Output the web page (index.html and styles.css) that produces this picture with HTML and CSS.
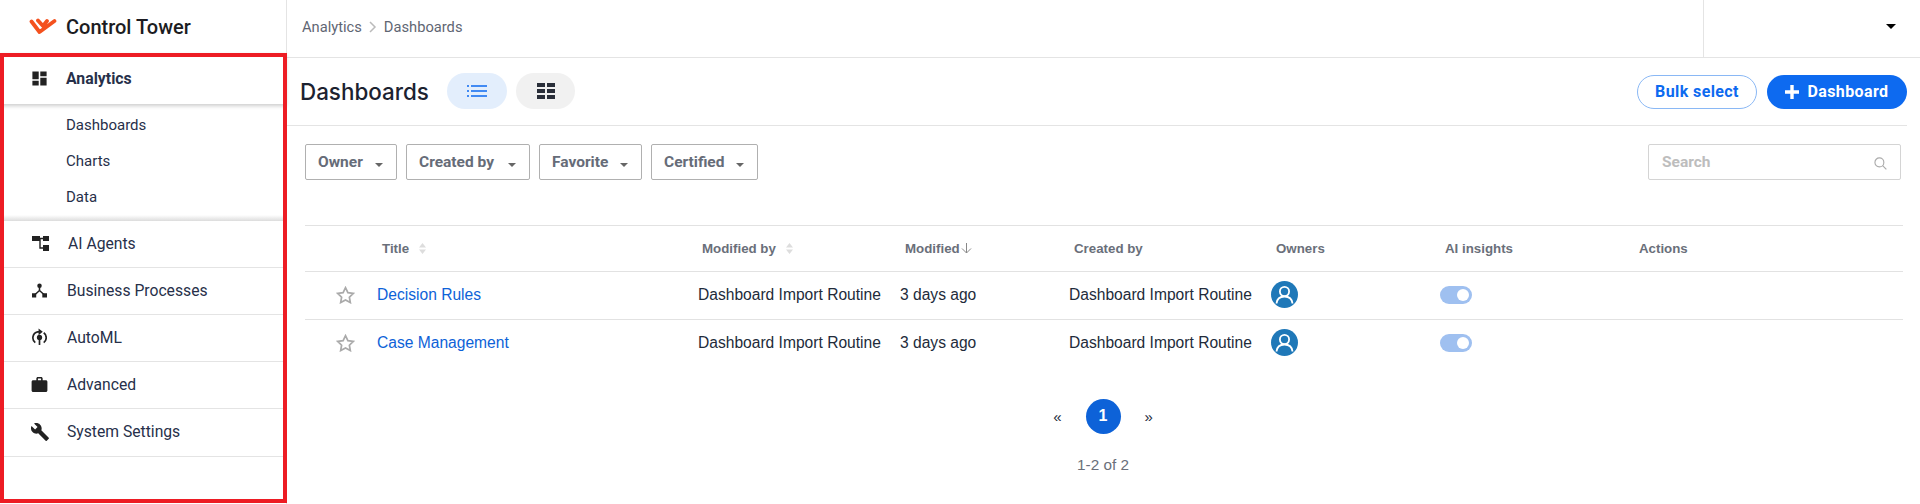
FILE: index.html
```html
<!DOCTYPE html>
<html lang="en">
<head>
  <meta charset="UTF-8" />
  <title>Control Tower</title>
  <link rel="stylesheet" href="styles.css">
</head>
<body>
  <aside class="sidebar">
    <div class="brand">
      <svg class="logo" viewBox="0 0 28 17" width="28" height="17">
        <path d="M2.500 3.500L10.500 14L25.500 3M9 2.500L14 8L18 3" fill="none" stroke="#f4511e" stroke-width="3.800" stroke-linecap="round" stroke-linejoin="round"/>
      </svg>
      <span>Control Tower</span>
    </div>
    <div class="nav-open">
      <div class="nav-item nav-active">
        <svg class="nav-icon" viewBox="2.500 2.500 19 19"><path d="M3 13h8V3H3v10zm0 8h8v-6H3v6zm10 0h8V11h-8v10zm0-18v6h8V3h-8z"/></svg>
        <span>Analytics</span>
      </div>
      <ul class="subnav">
        <li>Dashboards</li>
        <li>Charts</li>
        <li>Data</li>
      </ul>
    </div>
    <div class="nav-item">
      <svg class="nav-icon icon-wide" viewBox="0 0 17 15"><path d="M0 0h8v5H0zM11 0h6v5h-6zM11 9h6v6h-6z"/><path d="M7 2.500h5M8 2.500v9.500h4" fill="none" stroke="#222" stroke-width="1.400"/></svg>
      <span class="agents-label">AI Agents</span>
    </div>
    <div class="nav-item">
      <svg class="nav-icon" viewBox="0 0 16 15"><circle cx="8" cy="2.400" r="2.400"/><path d="M0 10.500h4.500V15H0zM11 10.500h5V15h-5z"/><path d="M8 3v5M8 7.500L3 12M8 7.500L13 12" fill="none" stroke="#222" stroke-width="1.600"/></svg>
      <span>Business Processes</span>
    </div>
    <div class="nav-item">
      <svg class="nav-icon icon-tall" viewBox="0 0 16 18"><circle cx="8" cy="9.500" r="2.800"/><path d="M7.100 11h1.800v6.500H7.100z"/><path d="M3.500 15A6.500 6.500 0 0 1 6 3.500H8M12.500 15A6.500 6.500 0 0 0 12.500 4.500" fill="none" stroke="#222" stroke-width="1.800"/><path d="M7 0l4.500 3.500L7 7z"/></svg>
      <span>AutoML</span>
    </div>
    <div class="nav-item">
      <svg class="nav-icon icon-wide icon-shift" viewBox="2 2 20 19"><path d="M20 6h-4V4c0-1.110-.890-2-2-2h-4c-1.110 0-2 .890-2 2v2H4c-1.110 0-1.990.890-1.990 2L2 19c0 1.110.890 2 2 2h16c1.110 0 2-.890 2-2V8c0-1.110-.890-2-2-2zm-6 0h-4V4h4v2z"/></svg>
      <span>Advanced</span>
    </div>
    <div class="nav-item nav-last">
      <svg class="nav-icon icon-wrench" viewBox="1 1 22 22"><path d="M22.700 19l-9.100-9.100c.900-2.300.400-5-1.500-6.900-2-2-5-2.400-7.400-1.300L9 6 6 9 1.600 4.700C.400 7.100.900 10.100 2.900 12.100c1.900 1.900 4.600 2.400 6.900 1.500l9.100 9.100c.400.400 1 .400 1.400 0l2.300-2.300c.500-.400.500-1.100.100-1.400z"/></svg>
      <span>System Settings</span>
    </div>
    <div class="highlight"></div>
  </aside>

  <main class="main">
    <header class="topbar">
      <div class="crumbs">
        <span>Analytics</span>
        <svg viewBox="0 0 8 12" width="8" height="12"><path d="M1 1l5 5-5 5" fill="none" stroke="#bbb" stroke-width="1.500"/></svg>
        <span>Dashboards</span>
      </div>
      <div class="user-menu"><span class="caret"></span></div>
    </header>

    <div class="page-head">
      <h1>Dashboards</h1>
      <button class="view-btn view-on">
        <svg viewBox="0 0 20 12" width="20" height="12"><path d="M0 1h2M4 1h16M0 6h2M4 6h16M0 11h2M4 11h16" stroke="#0d6af0" stroke-width="1.600" fill="none"/></svg>
      </button>
      <button class="view-btn view-off">
        <svg viewBox="0 0 18 16" width="18" height="16"><path d="M0 0h8v4H0zM10 0h8v4h-8zM0 6h8v4H0zM10 6h8v4h-8zM0 12h8v4H0zM10 12h8v4h-8z" fill="#2a2f3a"/></svg>
      </button>
      <div class="head-actions">
        <button class="btn-outline">Bulk select</button>
        <button class="btn-solid">
          <svg viewBox="0 0 14 14" width="14" height="14"><path d="M7 0v14M0 7h14" stroke="#fff" stroke-width="3.400"/></svg>
          Dashboard
        </button>
      </div>
    </div>

    <div class="filters">
      <button class="filter owner">Owner<i></i></button>
      <button class="filter created">Created by<i></i></button>
      <button class="filter favorite">Favorite<i></i></button>
      <button class="filter certified">Certified<i></i></button>
      <div class="search">
        <span>Search</span>
        <svg viewBox="0 0 14 14" width="13" height="13"><circle cx="5.800" cy="5.800" r="4.800" fill="none" stroke="#aaa" stroke-width="1.200"/><path d="M9.300 9.300L13.300 13.300" stroke="#aaa" stroke-width="1.200"/></svg>
      </div>
    </div>

    <table class="grid">
      <colgroup>
        <col class="c-star"><col class="c-title"><col class="c-by"><col class="c-mod"><col class="c-by"><col class="c-mod"><col class="c-ai"><col>
      </colgroup>
      <thead>
        <tr>
          <th></th>
          <th>Title <svg class="sort" viewBox="0 0 7 11"><path d="M3.500 0L7 4.500H0zM3.500 11L0 6.500h7z"/></svg></th>
          <th>Modified by <svg class="sort" viewBox="0 0 7 11"><path d="M3.500 0L7 4.500H0zM3.500 11L0 6.500h7z"/></svg></th>
          <th>Modified<svg class="arrow" viewBox="0 0 11 11" width="11" height="11"><path d="M5.500 0v10M1 5.500l4.500 4.500 4.500-4.500" fill="none" stroke="#888" stroke-width="1"/></svg></th>
          <th>Created by</th>
          <th>Owners</th>
          <th>AI insights</th>
          <th>Actions</th>
        </tr>
      </thead>
      <tbody>
        <tr>
          <td><svg class="star" viewBox="0 0 20 19"><path d="M10 1.800l2.500 5.200 5.700.800-4.100 4 1 5.700-5.100-2.700-5.100 2.700 1-5.700-4.100-4 5.700-.800z" fill="none" stroke="#aaa" stroke-width="1.800"/></svg></td>
          <td><a href="#">Decision Rules</a></td>
          <td>Dashboard Import Routine</td>
          <td>3 days ago</td>
          <td>Dashboard Import Routine</td>
          <td><svg class="avatar" viewBox="0 0 27 27"><circle cx="13.500" cy="13.500" r="13.500" fill="#1f78b8"/><circle cx="13.500" cy="10.500" r="4.600" fill="none" stroke="#fff" stroke-width="1.800"/><path d="M5.500 22.500c.500-4.500 3.500-7 8-7s7.500 2.500 8 7" fill="none" stroke="#fff" stroke-width="1.800"/></svg></td>
          <td><span class="toggle"></span></td>
          <td></td>
        </tr>
        <tr>
          <td><svg class="star" viewBox="0 0 20 19"><path d="M10 1.800l2.500 5.200 5.700.800-4.100 4 1 5.700-5.100-2.700-5.100 2.700 1-5.700-4.100-4 5.700-.800z" fill="none" stroke="#aaa" stroke-width="1.800"/></svg></td>
          <td><a href="#">Case Management</a></td>
          <td>Dashboard Import Routine</td>
          <td>3 days ago</td>
          <td>Dashboard Import Routine</td>
          <td><svg class="avatar" viewBox="0 0 27 27"><circle cx="13.500" cy="13.500" r="13.500" fill="#1f78b8"/><circle cx="13.500" cy="10.500" r="4.600" fill="none" stroke="#fff" stroke-width="1.800"/><path d="M5.500 22.500c.500-4.500 3.500-7 8-7s7.500 2.500 8 7" fill="none" stroke="#fff" stroke-width="1.800"/></svg></td>
          <td><span class="toggle"></span></td>
          <td></td>
        </tr>
      </tbody>
    </table>

    <nav class="pager">
      <span>«</span>
      <span class="page-current">1</span>
      <span>»</span>
    </nav>
    <div class="count">1-2 of 2</div>
  </main>
</body>
</html>
```

FILE: styles.css
```css
* {
  box-sizing: border-box;
}

html, body {
  height: 100%;
}

body {
  margin: 0;
  display: flex;
  height: 504px;
  overflow: hidden;
  background: #fff;
  color: #222;
  font-family: Roboto, sans-serif;
}

/* sidebar */
.sidebar {
  position: relative;
  width: 287px;
  flex: none;
  border-right: 1px solid #e4e4e4;
}

.brand {
  height: 53px;
  display: flex;
  align-items: center;
  padding-left: 29px;
  gap: 9px;
  font-size: 20px;
  font-weight: 500;
  color: #1c1c22;
}

.logo {
  flex: none;
}

.nav-item {
  height: 47px;
  display: flex;
  align-items: center;
  padding-left: 32px;
  padding-bottom: 2px;
  font-size: 15.700px;
  color: #27304a;
  border-bottom: 1px solid #e4e4e4;
}

.nav-last {
  height: 48px;
}

.nav-icon {
  width: 15px;
  height: 15px;
  margin-right: 20px;
  fill: #222;
  flex: none;
}

.icon-wide {
  width: 17px;
  margin-right: 18px;
}

.icon-shift {
  margin-left: -1px;
  margin-right: 19px;
}

.icon-tall {
  height: 18px;
}

.icon-wrench {
  width: 18px;
  height: 18px;
  margin-left: -1px;
  margin-right: 18px;
}

.agents-label {
  margin-left: 1px;
}

.nav-active {
  height: 51px;
  padding-bottom: 0;
  font-weight: 700;
  font-size: 15.800px;
  box-shadow: 0 2px 4px rgba(0, 0, 0, 0.2);
  border-bottom: 0;
  position: relative;
}

.nav-active .nav-icon {
  margin-right: 19px;
}

.subnav {
  list-style: none;
  margin: 0;
  padding: 3px 0 6px 66px;
  font-size: 15px;
  color: #27304a;
  background: linear-gradient(to bottom, transparent, #dcdcdc) bottom / 100% 6px no-repeat;
}

.subnav li {
  height: 36px;
  line-height: 36px;
}

.highlight {
  position: absolute;
  left: 0;
  top: 53px;
  width: 287px;
  height: 450px;
  border: 4px solid #ed1c24;
  pointer-events: none;
}

/* main */
.main {
  flex: 1;
  min-width: 0;
}

.topbar {
  height: 58px;
  display: flex;
  align-items: stretch;
  justify-content: space-between;
  border-bottom: 1px solid #e4e4e4;
}

.crumbs {
  display: flex;
  align-items: center;
  gap: 7px;
  padding-left: 15px;
  font-size: 14.700px;
  color: #5f6673;
  margin-top: -3px;
}

.user-menu {
  width: 217px;
  border-left: 1px solid #e4e4e4;
  display: flex;
  justify-content: flex-end;
  align-items: center;
  padding-right: 24px;
}

.caret {
  width: 0;
  height: 0;
  border-left: 5px solid transparent;
  border-right: 5px solid transparent;
  border-top: 5px solid #000;
  margin-top: -4px;
}

.page-head {
  height: 68px;
  width: 1620px;
  display: flex;
  align-items: center;
  padding-left: 13px;
  border-bottom: 1px solid #e4e4e4;
}

h1 {
  margin: 0 19px 0 0;
  font-family: Inter, sans-serif;
  font-size: 22.400px;
  font-weight: 500;
  color: #1c2230;
  width: 128px;
  white-space: nowrap;
}

.view-btn {
  height: 36px;
  border: 0;
  border-radius: 18px;
  display: flex;
  align-items: center;
  justify-content: center;
  padding: 0;
  margin-top: -1px;
}

.view-on {
  width: 60px;
  background: #e3eefc;
  margin-right: 9px;
}

.view-off {
  width: 59px;
  background: #f1f1f1;
}

.head-actions {
  margin-left: auto;
  display: flex;
  align-items: center;
  gap: 10px;
}

.btn-outline, .btn-solid {
  height: 34px;
  border-radius: 17px;
  font-family: Roboto, sans-serif;
  font-size: 16px;
  letter-spacing: 0.4px;
  font-weight: 700;
  padding: 0;
}

.btn-outline {
  width: 120px;
  background: #fff;
  color: #0d6af0;
  border: 1px solid #8ab8f5;
}

.btn-solid {
  width: 140px;
  background: #0d6af0;
  color: #fff;
  border: 0;
  display: flex;
  align-items: center;
  justify-content: center;
  gap: 8px;
}

.filters {
  display: flex;
  gap: 9px;
  padding: 18px 19px 0 18px;
  align-items: center;
}

.filter {
  height: 36px;
  background: #fff;
  border: 1px solid #b0b0b0;
  border-radius: 2px;
  font-family: Roboto, sans-serif;
  font-size: 15.500px;
  font-weight: 700;
  color: #666c78;
  text-align: left;
  padding: 0 0 0 12px;
  position: relative;
}

.filter i {
  position: absolute;
  right: 13px;
  top: 18px;
  border-left: 4px solid transparent;
  border-right: 4px solid transparent;
  border-top: 4px solid #666;
}

.owner { width: 92px; }
.created { width: 124px; }
.favorite { width: 103px; }
.certified { width: 107px; }

.search {
  width: 253px;
  height: 36px;
  margin-left: auto;
  border: 1px solid #d4d4d4;
  border-radius: 2px;
  display: flex;
  align-items: center;
  justify-content: space-between;
  padding: 0 13px 0 13px;
  font-size: 15.500px;
  font-weight: 700;
  color: #bdbdbd;
}

.search svg {
  margin-top: 2px;
}

/* table */
.grid {
  table-layout: fixed;
  border-collapse: collapse;
  width: 1598px;
  margin: 45px 0 0 18px;
  font-family: "Liberation Sans", Arial, sans-serif;
  font-size: 15.600px;
  color: #222b3a;
}

.c-star { width: 68px; }
.c-title { width: 320px; }
.c-by { width: 202px; }
.c-mod { width: 169px; }
.c-ai { width: 194px; }

.grid th {
  height: 46px;
  padding: 0 0 1px 9px;
  text-align: left;
  font-size: 13.300px;
  font-weight: 700;
  color: #6a6f7a;
  border-top: 1px solid #e2e2e2;
  border-bottom: 1px solid #e2e2e2;
}

.grid th:nth-child(n+4) {
  padding-left: 10px;
}

.grid td {
  height: 48px;
  padding: 0 0 2px 5px;
  border-bottom: 1px solid #e2e2e2;
  vertical-align: middle;
}

.grid tbody tr:last-child td {
  border-bottom: 0;
}

.grid a {
  color: #0d62d8;
  text-decoration: none;
  margin-left: -1px;
}

.sort {
  width: 7px;
  height: 11px;
  margin-left: 6px;
  vertical-align: -1px;
  fill: #ddd;
}

.arrow {
  vertical-align: -1px;
  margin-left: 1px;
}

.star {
  width: 19px;
  height: 18px;
  display: block;
  margin-left: 26px;
}

.avatar {
  width: 27px;
  height: 27px;
  display: block;
}

.toggle {
  display: block;
  width: 32px;
  height: 18px;
  border-radius: 9px;
  background: #9fc0f0;
  position: relative;
}

.toggle::after {
  content: "";
  position: absolute;
  right: 3px;
  top: 3px;
  width: 12px;
  height: 12px;
  border-radius: 50%;
  background: #fff;
}

/* pagination */
.pager {
  display: flex;
  justify-content: center;
  align-items: center;
  gap: 24px;
  margin-top: 31px;
  width: 1632px;
  font-family: "Liberation Sans", Arial, sans-serif;
  font-size: 15px;
  color: #222b3a;
}

.page-current {
  width: 35px;
  height: 35px;
  border-radius: 50%;
  background: #0d62d8;
  color: #fff;
  display: flex;
  align-items: center;
  justify-content: center;
  font-size: 16px;
  font-weight: 700;
}

.count {
  width: 1632px;
  margin-top: 22px;
  text-align: center;
  font-family: "Liberation Sans", Arial, sans-serif;
  font-size: 15.300px;
  color: #6a6f7a;
}
```
